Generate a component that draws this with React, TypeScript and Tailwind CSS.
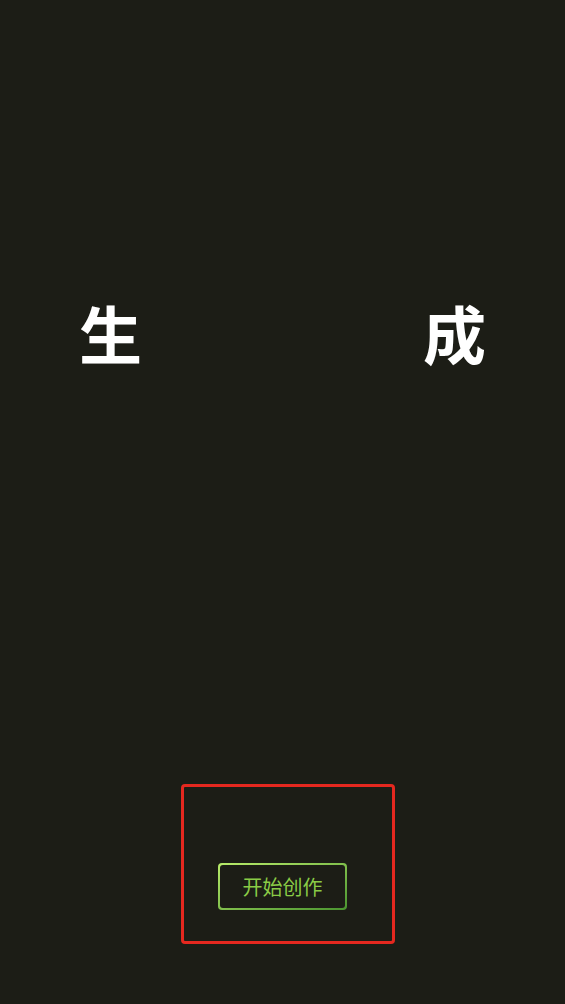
import React from "react";

export default function App() {
  return (
    <div
      className="w-full h-[1004px] bg-[#1c1d16] flex flex-col overflow-hidden"
      style={{ fontFamily: '"Noto Sans CJK SC", "Noto Sans", sans-serif' }}
    >
      <div className="mt-[300px] flex justify-between px-[79px] text-white font-bold text-[63px] leading-none">
        <span>生</span>
        <span>成</span>
      </div>
      <div className="mt-[500px] flex justify-center">
        <div className="relative">
          <div className="absolute left-[-37px] top-[-79px] w-[214px] h-[160px] border-[3px] border-[#e5281f] rounded-[4px] pointer-events-none" />
          <div className="rounded-[4px] p-[2px] bg-gradient-to-br from-[#b8ec6a] to-[#4a9530]">
            <div className="w-[125px] h-[43px] rounded-[3px] bg-[#1c1d16] flex items-center justify-center text-[20px] leading-none text-[#8acb46]">
              开始创作
            </div>
          </div>
        </div>
      </div>
    </div>
  );
}
